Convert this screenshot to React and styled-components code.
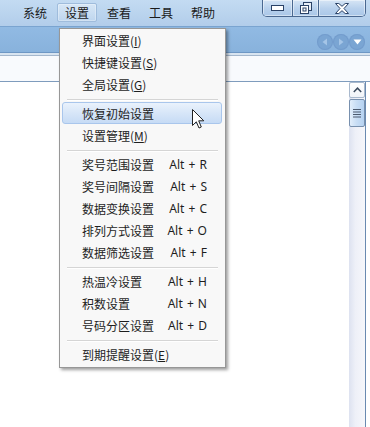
import React from "react";
import styled, { createGlobalStyle } from "styled-components";

const Global = createGlobalStyle`
  html, body { margin: 0; padding: 0; background: #ffffff; }
  body { font-family: "Noto Sans CJK SC", "Noto Sans", sans-serif; }
  * { box-sizing: border-box; }
`;

const Screen = styled.div`
  position: relative;
  width: 370px;
  height: 427px;
  overflow: hidden;
  display: flex;
  flex-direction: column;
  background: #ffffff;
  font-family: "Noto Sans CJK SC", "Noto Sans", sans-serif;
  font-size: 12px;
  color: #1c1c1c;
`;

const TitleBar = styled.div`
  height: 26px;
  display: flex;
  align-items: flex-start;
  background: linear-gradient(#c3dbf2, #b2cdea);
`;

const MenuBar = styled.div`
  display: flex;
  padding: 3px 0 0 14px;
`;

const MenuItem = styled.div`
  width: 40px;
  height: 19px;
  margin: 0 1px;
  line-height: 17px;
  text-align: center;
  font-size: 12px;
  color: #1a1a1a;
  border: 1px solid ${(p) => (p.$active ? "#9fbcdc" : "transparent")};
  border-radius: 2px;
  background: ${(p) =>
    p.$active ? "linear-gradient(rgba(255,255,255,0.35), rgba(255,255,255,0.12))" : "transparent"};
  box-shadow: ${(p) => (p.$active ? "inset 0 0 0 1px rgba(255,255,255,0.3)" : "none")};
`;

const WindowControls = styled.div`
  margin-left: auto;
  margin-right: 4px;
  display: flex;
  height: 17px;
  border: 1px solid #4a6890;
  border-top: none;
  border-radius: 0 0 5px 5px;
  overflow: hidden;
`;

const CtrlButton = styled.div`
  width: ${(p) => p.$w}px;
  height: 100%;
  display: flex;
  align-items: center;
  justify-content: center;
  background: linear-gradient(#d6e5f5, #b7d0ec 55%, #aac7e8);
  box-shadow: inset 0 0 0 1px rgba(255, 255, 255, 0.45);
  & + & {
    border-left: 1px solid #4a6890;
  }
`;

const Toolbar = styled.div`
  height: 27px;
  border-top: 1px solid #7aa4d0;
  border-bottom: 1px solid #6e97c4;
  background: linear-gradient(#91bae3, #88b2dc);
  display: flex;
  justify-content: flex-end;
  align-items: flex-start;
  padding: 7px 5px 0 0;
`;

const NavCircle = styled.div`
  width: 16px;
  height: 16px;
  border-radius: 50%;
  background: #7aa5d3;
  box-shadow: inset 0 0 0 1px rgba(110, 150, 200, 0.6);
  display: flex;
  align-items: center;
  justify-content: center;
`;

const Stripe = styled.div`
  height: 2px;
  background: #d8e4f0;
`;

const HeaderPanel = styled.div`
  height: 27px;
  border-top: 1px solid #a4b7cd;
  border-bottom: 1px solid #7f9cbd;
  background: #f8fafd;
`;

const Body = styled.div`
  flex: 1;
  display: flex;
`;

const Content = styled.div`
  flex: 1;
  background: #ffffff;
`;

const ScrollBar = styled.div`
  width: 17px;
  border-right: 1px solid #6a8ab1;
  display: flex;
  flex-direction: column;
  background: linear-gradient(90deg, #dde2f0, #eef0f8 40%, #f6f7fb);
`;

const ScrollUp = styled.div`
  height: 16px;
  border: 1px solid #a9b9cd;
  border-radius: 2px;
  background: linear-gradient(#ffffff, #f1f4f9);
  display: flex;
  align-items: center;
  justify-content: center;
`;

const Thumb = styled.div`
  height: 28px;
  margin-top: 1px;
  border: 1px solid #7890ae;
  border-radius: 2px;
  background: linear-gradient(90deg, #e2eefb, #c9def5 45%, #b6d2f1);
  display: flex;
  align-items: center;
  justify-content: center;
`;

const Gutter = styled.div`
  width: 4px;
  background: #ffffff;
`;

const Dropdown = styled.div`
  position: absolute;
  left: 59px;
  top: 28px;
  width: 167px;
  border: 1px solid #979797;
  background: #f8f8f8;
  box-shadow: 2px 2px 3px rgba(0, 0, 0, 0.38);
  padding: 0 0 2px 0;
  display: flex;
  flex-direction: column;
`;

const Row = styled.div`
  height: 22px;
  margin: 0 3px 0 2px;
  padding: 0 14px 0 19px;
  display: flex;
  align-items: center;
  justify-content: space-between;
  border: 1px solid ${(p) => (p.$hot ? "#a9c6ec" : "transparent")};
  border-radius: 3px;
  background: ${(p) =>
    p.$hot ? "linear-gradient(#eaf2fc, #d7e6f8 50%, #c6dbf5)" : "transparent"};
  color: #1e1e1e;
  font-size: 12px;
  white-space: nowrap;
`;

const Label = styled.span`
  font-family: "Noto Sans CJK SC", "Noto Sans", sans-serif;
  letter-spacing: 0;
`;

const Shortcut = styled.span`
  font-family: "Noto Sans", "Noto Sans CJK SC", sans-serif;
  font-size: 12px;
  word-spacing: 1px;
`;

const Separator = styled.div`
  height: 1px;
  margin: 4px 7px 2px 7px;
  background: #d5d5d5;
  box-shadow: 0 1px 0 #ffffff;
`;

const Cursor = styled.svg`
  position: absolute;
  left: 192px;
  top: 109px;
`;

const groups = [
  [
    { t: "界面设置", k: "I" },
    { t: "快捷键设置", k: "S" },
    { t: "全局设置", k: "G" },
  ],
  [{ t: "恢复初始设置", hot: true }, { t: "设置管理", k: "M" }],
  [
    { t: "奖号范围设置", s: "Alt + R" },
    { t: "奖号间隔设置", s: "Alt + S" },
    { t: "数据变换设置", s: "Alt + C" },
    { t: "排列方式设置", s: "Alt + O" },
    { t: "数据筛选设置", s: "Alt + F" },
  ],
  [
    { t: "热温冷设置", s: "Alt + H" },
    { t: "积数设置", s: "Alt + N" },
    { t: "号码分区设置", s: "Alt + D" },
  ],
  [{ t: "到期提醒设置", k: "E" }],
];

export default function App() {
  return (
    <>
      <Global />
      <Screen>
        <TitleBar>
          <MenuBar>
            <MenuItem>系统</MenuItem>
            <MenuItem $active>设置</MenuItem>
            <MenuItem>查看</MenuItem>
            <MenuItem>工具</MenuItem>
            <MenuItem>帮助</MenuItem>
          </MenuBar>
          <WindowControls>
            <CtrlButton $w={29}>
              <svg width="13" height="6" viewBox="0 0 13 6">
                <rect x="0.5" y="0.5" width="12" height="5" fill="#ffffff" stroke="#2b4266" />
              </svg>
            </CtrlButton>
            <CtrlButton $w={26}>
              <svg width="12" height="12" viewBox="0 0 12 12">
                <rect x="3.5" y="0.5" width="8" height="8" fill="#e8eef6" stroke="#2b4266" />
                <rect x="0.5" y="3.5" width="8" height="8" fill="#ffffff" stroke="#2b4266" />
                <rect x="3" y="6" width="3" height="3" fill="none" stroke="#2b4266" />
              </svg>
            </CtrlButton>
            <CtrlButton $w={47}>
              <svg width="14" height="11" viewBox="0 0 14 11">
                <polygon
                  points="0.5,0.5 3.8,0.5 7,3.3 10.2,0.5 13.5,0.5 9,5.5 13.5,10.5 10.2,10.5 7,7.7 3.8,10.5 0.5,10.5 5,5.5"
                  fill="#ffffff"
                  stroke="#2b4266"
                  strokeWidth="1"
                  strokeLinejoin="round"
                />
              </svg>
            </CtrlButton>
          </WindowControls>
        </TitleBar>
        <Toolbar>
          <NavCircle>
            <svg width="8" height="8" viewBox="0 0 8 8">
              <polygon points="6,0.5 6,7.5 1.5,4" fill="#a5c5e7" />
            </svg>
          </NavCircle>
          <NavCircle>
            <svg width="8" height="8" viewBox="0 0 8 8">
              <polygon points="2,0.5 2,7.5 6.5,4" fill="#a5c5e7" />
            </svg>
          </NavCircle>
          <NavCircle>
            <svg width="9" height="6" viewBox="0 0 9 6">
              <polygon points="0.5,0.5 8.5,0.5 4.5,5.5" fill="#ffffff" />
            </svg>
          </NavCircle>
        </Toolbar>
        <Stripe />
        <HeaderPanel />
        <Body>
          <Content />
          <ScrollBar>
            <ScrollUp>
              <svg width="9" height="6" viewBox="0 0 9 6">
                <polyline points="0.8,5 4.5,1.2 8.2,5" fill="none" stroke="#3b4a5e" strokeWidth="1.5" />
              </svg>
            </ScrollUp>
            <Thumb>
              <svg width="8" height="9" viewBox="0 0 8 9">
                <rect x="0" y="0" width="8" height="1" fill="#4c5b70" />
                <rect x="0" y="2.5" width="8" height="1" fill="#4c5b70" />
                <rect x="0" y="5" width="8" height="1" fill="#4c5b70" />
                <rect x="0" y="7.5" width="8" height="1" fill="#4c5b70" />
              </svg>
            </Thumb>
          </ScrollBar>
          <Gutter />
        </Body>

        <Dropdown>
          {groups.map((g, gi) => (
            <React.Fragment key={gi}>
              {gi > 0 && <Separator />}
              {g.map((it) => (
                <Row key={it.t} $hot={it.hot}>
                  <Label>
                    {it.t}
                    {it.k && (
                      <>
                        (<u>{it.k}</u>)
                      </>
                    )}
                  </Label>
                  {it.s && <Shortcut>{it.s}</Shortcut>}
                </Row>
              ))}
            </React.Fragment>
          ))}
        </Dropdown>

        <Cursor width="13" height="21" viewBox="0 0 13 21">
          <path
            d="M0.5 0.5 L0.5 16.5 L4.3 12.8 L7 19 L9.3 18 L6.7 11.8 L11.8 11.8 Z"
            fill="#ffffff"
            stroke="#222"
            strokeWidth="1"
            strokeLinejoin="round"
          />
        </Cursor>
      </Screen>
    </>
  );
}
